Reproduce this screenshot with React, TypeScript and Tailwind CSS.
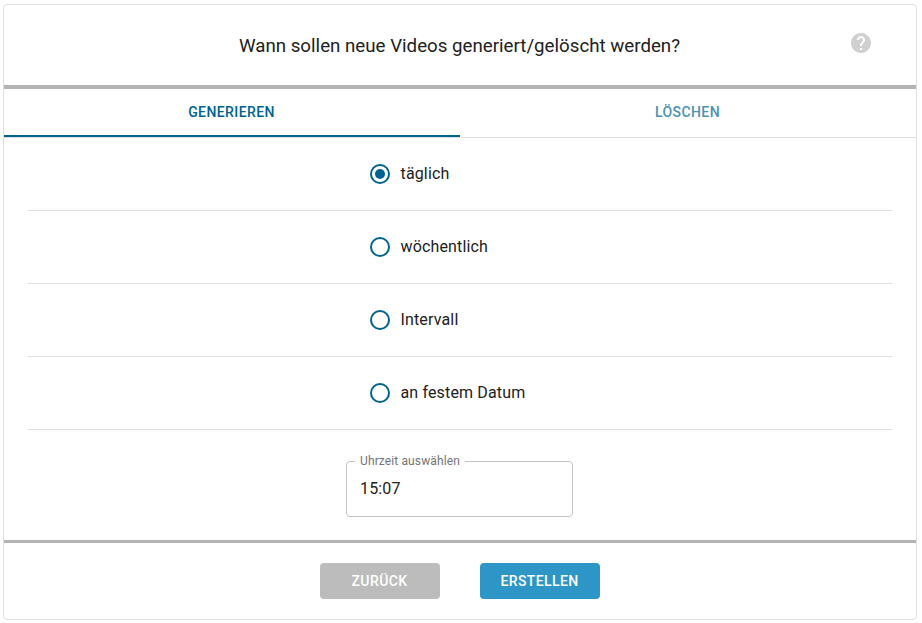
const options = ["täglich", "wöchentlich", "Intervall", "an festem Datum"];

export default function App() {
  return (
    <div className="h-[623px] w-[922px] bg-white pt-1 pl-[3px] font-['Roboto',sans-serif] text-[#212121]">
      <div className="flex h-[616px] w-[914px] flex-col rounded border border-[#e0e0e0]">
        <header className="flex h-20 shrink-0 items-center pl-[66px] pr-[43px]">
          <h1 className="flex-1 pt-0.5 text-center text-[18.72px] leading-7">Wann sollen neue Videos generiert/gelöscht werden?</h1>
          <svg viewBox="0 0 24 24" className="mb-1 size-6 fill-[#d0d0d0]">
            <path d="M12 2C6.48 2 2 6.48 2 12s4.48 10 10 10 10-4.48 10-10S17.52 2 12 2zm1 17h-2v-2h2v2zm2.07-7.75l-.9.92C13.45 12.9 13 13.5 13 15h-2v-.5c0-1.1.45-2.1 1.17-2.83l1.24-1.26c.37-.36.59-.86.59-1.41 0-1.1-.9-2-2-2s-2 .9-2 2H8c0-2.21 1.79-4 4-4s4 1.79 4 4c0 .88-.36 1.68-.93 2.25z" />
          </svg>
        </header>
        <div className="h-1 shrink-0 bg-[#b3b3b3]" />
        <nav className="grid h-[49px] shrink-0 grid-cols-2 border-b border-[#e0e0e0] text-sm font-medium tracking-[0.4px]">
          <button className="flex items-center justify-center border-b-2 border-[#00638f] pr-px text-[#00638f]">GENERIEREN</button>
          <button className="flex items-center justify-center border-b-2 border-transparent pr-px text-[#4c92b1]">LÖSCHEN</button>
        </nav>
        <div className="flex shrink-0 flex-col px-6">
          {options.map((label, i) => (
            <label key={label} className="flex h-[73px] items-center gap-[10.5px] border-b border-[#e0e0e0] pl-[342px]">
              <span className="flex size-5 items-center justify-center rounded-full border-2 border-[#00638f]">
                {i === 0 && <span className="size-2.5 rounded-full bg-[#00638f]" />}
              </span>
              <span className="text-base tracking-[0.15px]">{label}</span>
            </label>
          ))}
        </div>
        <fieldset className="mt-[23px] ml-[342px] h-[64px] w-[227px] shrink-0 rounded border border-[#c4c4c4] px-[13px]">
          <legend className="-ml-[5px] px-[5px] text-xs leading-4 tracking-[0.12px] text-[#757575]">Uhrzeit auswählen</legend>
          <div className="pt-2 text-base leading-6 tracking-[0.15px]">15:07</div>
        </fieldset>
        <div className="mt-[23px] h-[3px] shrink-0 bg-[#b3b3b3]" />
        <footer className="flex justify-center gap-10 pt-5 text-sm font-medium tracking-[0.4px] text-white">
          <button className="h-9 w-[120px] rounded bg-[#bcbcbc] pr-px">ZURÜCK</button>
          <button className="h-9 w-[120px] rounded bg-[#2d96c6] pr-px">ERSTELLEN</button>
        </footer>
      </div>
    </div>
  );
}
